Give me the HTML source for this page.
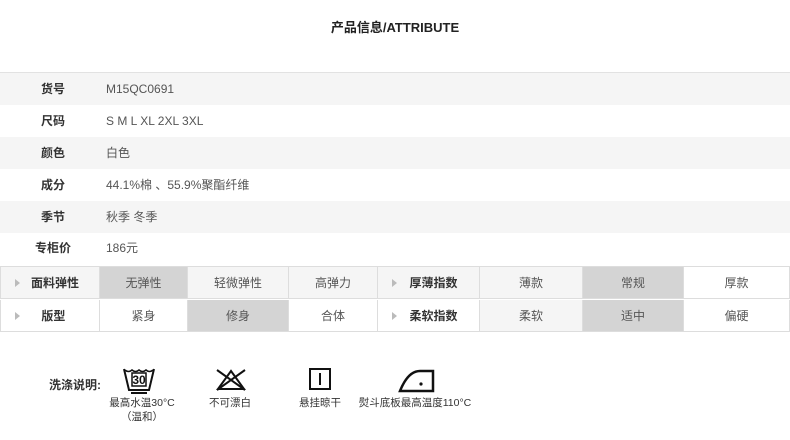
<!DOCTYPE html>
<html><head><meta charset="utf-8"><style>
*{margin:0;padding:0;box-sizing:border-box}
body{width:790px;height:440px;background:#fff;font-family:"Liberation Sans","Noto Sans CJK SC",sans-serif;font-size:12px;color:#555;position:relative;overflow:hidden}
.title{position:absolute;top:17px;left:0;width:790px;text-align:center;font-weight:bold;font-size:13px;color:#222}
.info{position:absolute;top:72px;left:0;width:790px;border-top:1px solid #e2e2e2}
.row{height:32px;line-height:32px;position:relative}
.row:nth-child(odd){background:#f5f5f5}
.row .l{position:absolute;left:0;width:106px;text-align:center;font-weight:bold;color:#333}
.row .v{position:absolute;left:106px;color:#555}
.grid{position:absolute;top:266px;left:0;width:790px;border-top:1px solid #ddd}
.g{position:absolute;height:32px;line-height:32px;text-align:center;border-right:1px solid #ddd;border-bottom:1px solid #ddd;color:#555}
.lab{background:#f5f5f5;font-weight:bold;color:#333;font-size:12px}
.tri{position:absolute;left:14px;top:12px;width:0;height:0;border-left:5px solid #bbb;border-top:4px solid transparent;border-bottom:4px solid transparent}
.sel{background:#d4d4d4}
.lt{background:#f5f5f5}
.wash{position:absolute;top:376px;left:49px;font-weight:bold;color:#333;font-size:12px}
.cap{position:absolute;font-size:10.5px;color:#333;text-align:center;line-height:14px}
</style></head><body>
<div class="title">产品信息/ATTRIBUTE</div>
<div class="info">
<div class="row"><span class="l">货号</span><span class="v">M15QC0691</span></div>
<div class="row"><span class="l">尺码</span><span class="v">S M L XL 2XL 3XL</span></div>
<div class="row"><span class="l">颜色</span><span class="v">白色</span></div>
<div class="row"><span class="l">成分</span><span class="v">44.1%棉 、55.9%聚酯纤维</span></div>
<div class="row"><span class="l">季节</span><span class="v">秋季 冬季</span></div>
<div class="row" style="height:30px;line-height:30px"><span class="l">专柜价</span><span class="v">186元</span></div>
</div>
<div class="grid">
<div class="g lab" style="left:0;top:0;width:100px;border-left:1px solid #ddd"><i class="tri"></i>&nbsp;&nbsp;&nbsp;面料弹性</div>
<div class="g sel" style="left:100px;top:0;width:88px">无弹性</div>
<div class="g lt" style="left:188px;top:0;width:101px">轻微弹性</div>
<div class="g lt" style="left:289px;top:0;width:89px">高弹力</div>
<div class="g lab" style="left:378px;top:0;width:102px"><i class="tri"></i>&nbsp;&nbsp;&nbsp;厚薄指数</div>
<div class="g lt" style="left:480px;top:0;width:103px">薄款</div>
<div class="g sel" style="left:583px;top:0;width:101px">常规</div>
<div class="g" style="left:684px;top:0;width:106px">厚款</div>
<div class="g lab" style="left:0;top:33px;width:100px;border-left:1px solid #ddd;background:#fff"><i class="tri"></i>&nbsp;&nbsp;版型</div>
<div class="g" style="left:100px;top:33px;width:88px">紧身</div>
<div class="g sel" style="left:188px;top:33px;width:101px">修身</div>
<div class="g" style="left:289px;top:33px;width:89px">合体</div>
<div class="g lab" style="left:378px;top:33px;width:102px;background:#fff"><i class="tri"></i>&nbsp;&nbsp;&nbsp;柔软指数</div>
<div class="g lt" style="left:480px;top:33px;width:103px">柔软</div>
<div class="g sel" style="left:583px;top:33px;width:101px">适中</div>
<div class="g" style="left:684px;top:33px;width:106px">偏硬</div>
</div>
<div class="wash">洗涤说明:</div>
<svg style="position:absolute;left:122px;top:367px" width="34" height="28" viewBox="0 0 34 28" fill="none" stroke="#111" stroke-width="2">
<path d="M2 2 L7 23 H27 L32 2"/><path d="M3 3 q3.5 3 7 0 q3.5 3 7 0 q3.5 3 7 0 q3.5 3 7 0" stroke-width="1.5"/>
<rect x="10" y="6" width="14" height="13" stroke-width="1.5"/>
<text x="17" y="17" font-size="12" font-weight="bold" text-anchor="middle" fill="#111" stroke="none" font-family="Liberation Sans">30</text>
<path d="M9 26 H25"/></svg>
<div class="cap" style="left:104px;top:396px;width:76px">最高水温30°C<br>（温和）</div>
<svg style="position:absolute;left:214px;top:368px" width="34" height="24" viewBox="0 0 34 24" fill="none" stroke="#111" stroke-width="2">
<path d="M4 21 L17 3 L30 21 Z"/><path d="M3 2 L31 22 M31 2 L3 22"/></svg>
<div class="cap" style="left:198px;top:396px;width:64px">不可漂白</div>
<svg style="position:absolute;left:309px;top:368px" width="22" height="22" viewBox="0 0 22 22" fill="none" stroke="#111" stroke-width="2">
<rect x="1" y="1" width="20" height="20"/><path d="M11 5 V17"/></svg>
<div class="cap" style="left:288px;top:396px;width:64px">悬挂晾干</div>
<svg style="position:absolute;left:398px;top:368px" width="38" height="25" viewBox="0 0 38 25" fill="none" stroke="#111" stroke-width="2.5">
<path d="M2 23 H35 V3 H22 Q10 3 2 23 Z"/><circle cx="23" cy="16" r="1.6" fill="#111" stroke="none"/></svg>
<div class="cap" style="left:352px;top:396px;width:126px">熨斗底板最高温度110°C</div>
</body></html>
